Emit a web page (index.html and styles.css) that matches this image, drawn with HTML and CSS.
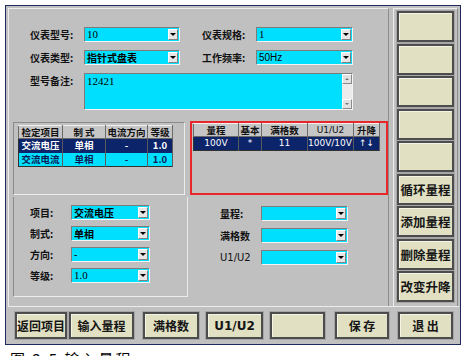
FILE: index.html
```html
<!DOCTYPE html>
<html lang="zh">
<head>
    <meta charset="UTF-8">
    <title>输入量程</title>
    <link rel="stylesheet" href="styles.css">
</head>
<body>
    <div class="window">
        <div class="body">
            <div class="main">
                <!-- 仪表信息 -->
                <div class="info">
                    <div class="info-row">
                        <span class="lbl">仪表型号:</span>
                        <div class="combo w96"><span class="val serif">10</span><i class="drop"></i></div>
                        <span class="lbl lbl-gap">仪表规格:</span>
                        <div class="combo w97"><span class="val serif">1</span><i class="drop"></i></div>
                    </div>
                    <div class="info-row">
                        <span class="lbl">仪表类型:</span>
                        <div class="combo w96"><span class="val bold">指针式盘表</span><i class="drop"></i></div>
                        <span class="lbl lbl-gap">工作频率:</span>
                        <div class="combo w97"><span class="val">50Hz</span><i class="drop"></i></div>
                    </div>
                    <div class="info-row memo-row">
                        <span class="lbl">型号备注:</span>
                        <div class="memo">
                            <span class="memo-text serif">12421</span>
                            <div class="vscroll">
                                <i class="sbtn up"></i>
                                <div class="track"></div>
                                <i class="sbtn down"></i>
                            </div>
                        </div>
                    </div>
                </div>

                <!-- 检定项目 / 量程列表 -->
                <div class="lists">
                    <div class="list-panel">
                        <table class="grid items">
                            <colgroup><col style="width:44px"><col style="width:43px"><col style="width:42px"><col style="width:25px"></colgroup>
                            <tr><th>检定项目</th><th>制 式</th><th>电流方向</th><th>等级</th></tr>
                            <tr class="row-sel"><td>交流电压</td><td>单相</td><td>-</td><td>1.0</td></tr>
                            <tr class="row-alt"><td>交流电流</td><td>单相</td><td>-</td><td>1.0</td></tr>
                        </table>
                    </div>
                    <div class="range-panel">
                        <table class="grid ranges">
                            <colgroup><col style="width:45px"><col style="width:23px"><col style="width:46px"><col style="width:46px"><col style="width:26px"></colgroup>
                            <tr><th>量程</th><th>基本</th><th>满格数</th><th class="latin">U1/U2</th><th>升降</th></tr>
                            <tr class="row-sel"><td>100V</td><td>*</td><td>11</td><td class="clip">100V/10V</td><td>↑↓</td></tr>
                        </table>
                    </div>
                </div>

                <!-- 编辑区 -->
                <div class="edit">
                    <div class="edit-left">
                        <div class="edit-row"><span class="lbl lbl-s">项目:</span><div class="combo w79"><span class="val bold">交流电压</span><i class="drop"></i></div></div>
                        <div class="edit-row"><span class="lbl lbl-s">制式:</span><div class="combo w79"><span class="val bold">单相</span><i class="drop"></i></div></div>
                        <div class="edit-row"><span class="lbl lbl-s">方向:</span><div class="combo w79"><span class="val">-</span><i class="drop"></i></div></div>
                        <div class="edit-row"><span class="lbl lbl-s">等级:</span><div class="combo w79"><span class="val serif">1.0</span><i class="drop"></i></div></div>
                    </div>
                    <div class="edit-right">
                        <div class="edit-row"><span class="lbl lbl-s">量程:</span><div class="combo w87"><span class="val"></span><i class="drop"></i></div></div>
                        <div class="edit-row"><span class="lbl lbl-s">满格数</span><div class="combo w87"><span class="val"></span><i class="drop"></i></div></div>
                        <div class="edit-row"><span class="lbl lbl-s latin">U1/U2</span><div class="combo w87"><span class="val"></span><i class="drop"></i></div></div>
                    </div>
                </div>
            </div>

            <div class="side">
                <button class="btn"></button>
                <button class="btn"></button>
                <button class="btn"></button>
                <button class="btn"></button>
                <button class="btn"></button>
                <button class="btn">循环量程</button>
                <button class="btn">添加量程</button>
                <button class="btn">删除量程</button>
                <button class="btn">改变升降</button>
            </div>
        </div>

        <div class="bar">
            <button class="btn b1">返回项目</button>
            <button class="btn b2">输入量程</button>
            <button class="btn b3">满格数</button>
            <button class="btn b4 latin">U1/U2</button>
            <button class="btn b5"></button>
            <button class="btn b6">保 存</button>
            <button class="btn b7">退 出</button>
        </div>
    </div>
    <p class="caption">图 3.5 输入量程</p>
</body>
</html>
```

FILE: styles.css
```css
* {
    box-sizing: border-box;
}

body {
    margin: 0;
    height: 356px;
    overflow: hidden;
    background: #fff;
    font-family: "Liberation Sans", "Noto Sans CJK SC", sans-serif;
    font-size: 10px;
    color: #000;
}

.window {
    margin: 5px 0 0 5px;
    width: 456px;
    height: 340px;
    border: 1px solid #1e2a5c;
    background: #c0c0c0;
    display: flex;
    flex-direction: column;
    padding: 2px 1px 0 2px;
}

.body {
    display: flex;
    height: 298px;
}

.main {
    width: 381px;
    border-top: 1px solid #ececec;
    border-left: 1px solid #ececec;
    border-right: 1px solid #8c8c8c;
}

/* labels & combos */
.lbl {
    width: 54px;
    font-family: "Noto Sans CJK SC", sans-serif;
    font-weight: bold;
    font-size: 10px;
    line-height: 15px;
    color: #111;
}

.lbl-gap {
    margin-left: 22px;
}

.lbl-s {
    width: 41px;
}

.latin {
    font-family: "DejaVu Sans", sans-serif;
    font-weight: normal;
}

.combo {
    display: flex;
    height: 15px;
    border: 1px solid;
    border-color: #7c7c7c #f4f4f4 #f4f4f4 #7c7c7c;
    background: #00e0fe;
}

.w96 { width: 96px; }
.w97 { width: 97px; }
.w79 { width: 79px; }
.w87 { width: 87px; }

.val {
    flex: 1;
    padding-left: 2px;
    font-size: 10px;
    line-height: 13px;
    white-space: nowrap;
    overflow: hidden;
}

.serif {
    font-family: "Liberation Serif", serif;
    font-size: 11px;
}

.bold {
    font-family: "Noto Sans CJK SC", sans-serif;
    font-weight: bold;
}

.drop {
    width: 10px;
    margin: 1px;
    background: #e6e6e6;
    border: 1px solid;
    border-color: #fff #808080 #808080 #fff;
    display: flex;
    align-items: center;
    justify-content: center;
}

.drop::after {
    content: "";
    border-left: 3px solid transparent;
    border-right: 3px solid transparent;
    border-top: 3px solid #000;
}

/* info section */
.info {
    padding: 18px 0 0 21px;
    display: flex;
    flex-direction: column;
    gap: 8px;
}

.info-row {
    display: flex;
    align-items: flex-start;
}

.memo {
    width: 269px;
    height: 37px;
    display: flex;
    border: 1px solid;
    border-color: #7c7c7c #f4f4f4 #f4f4f4 #7c7c7c;
    background: #00e0fe;
}

.memo-text {
    flex: 1;
    padding: 1px 2px;
}

.vscroll {
    width: 10px;
    display: flex;
    flex-direction: column;
    background: #e4e4e4;
}

.track {
    flex: 1;
    background: #ececec;
}

.sbtn {
    height: 10px;
    background: #e2e2e2;
    border: 1px solid;
    border-color: #fff #8a8a8a #8a8a8a #fff;
    display: flex;
    align-items: center;
    justify-content: center;
}

.sbtn.up::after {
    content: "";
    border-left: 2px solid transparent;
    border-right: 2px solid transparent;
    border-bottom: 2px solid #777;
}

.sbtn.down::after {
    content: "";
    border-left: 2px solid transparent;
    border-right: 2px solid transparent;
    border-top: 2px solid #777;
}

/* list tables */
.lists {
    margin-top: 12px;
    height: 73px;
    display: flex;
    padding-left: 4px;
}

.list-panel {
    width: 172px;
    border: 1px solid;
    border-color: #8a8a8a #ececec #ececec #8a8a8a;
    padding: 2px 0 0 4px;
}

.range-panel {
    width: 198px;
    margin-left: 5px;
    margin-top: -1px;
    border: 2px solid #e8272b;
    padding-left: 1px;
}

.grid {
    border-collapse: collapse;
    table-layout: fixed;
    border: 1px solid #303030;
    font-family: "Noto Sans CJK SC", sans-serif;
    font-size: 9.5px;
}

.items { width: 155px; }
.ranges { width: 186px; }

.grid th {
    height: 13px;
    padding: 0;
    background: #c6c6c6;
    border: 1px solid #6a6a6a;
    border-top-color: #f0f0f0;
    font-weight: bold;
    line-height: 12px;
    text-align: center;
    color: #111;
    overflow: hidden;
}

.grid th.latin {
    font-family: "DejaVu Sans", sans-serif;
    font-weight: normal;
    font-size: 9px;
}

.grid td {
    height: 14px;
    padding: 0;
    border-right: 1px solid #5a5a5a;
    text-align: center;
    line-height: 13px;
    white-space: nowrap;
    overflow: hidden;
    font-weight: bold;
}

.ranges td {
    font-family: "DejaVu Sans", "Noto Sans CJK SC", sans-serif;
    font-weight: normal;
    font-size: 9px;
}

.grid td.clip {
    text-align: left;
    text-overflow: clip;
}

.row-sel td {
    background: #0b246a;
    color: #fff;
}

.row-alt td {
    background: #00e0fe;
    color: #0b1a55;
}

/* edit section */
.edit {
    margin-top: 2px;
    height: 100px;
    display: flex;
    padding-left: 4px;
}

.edit-left {
    width: 175px;
    border-left: 1px solid #8a8a8a;
    border-right: 1px solid #ececec;
    border-bottom: 1px solid #ececec;
    padding: 8px 0 0 16px;
    display: flex;
    flex-direction: column;
    gap: 6px;
}

.edit-right {
    padding: 9px 0 0 32px;
    display: flex;
    flex-direction: column;
    gap: 7px;
}

.edit-row {
    display: flex;
}

/* side buttons */
.side {
    width: 65px;
    margin-left: 4px;
    border-top: 1px solid #ececec;
    border-left: 1px solid #ececec;
    border-right: 1px solid #8c8c8c;
    padding: 2px 3px 0 3px;
    display: flex;
    flex-direction: column;
    gap: 1.5px;
}

.btn {
    height: 31px;
    margin: 0;
    padding: 0;
    background: #e1e0c2;
    border: 2px solid #4c4c4c;
    box-shadow: inset 1px 1px 0 #f4f4e6, 0 0 0 1px #a6a6a6;
    font-family: "Noto Sans CJK SC", sans-serif;
    font-weight: bold;
    font-size: 12.5px;
    color: #151515;
    white-space: nowrap;
}

.btn.latin {
    font-family: "DejaVu Sans", sans-serif;
    font-weight: bold;
    font-size: 12px;
}

/* bottom bar */
.bar {
    flex: 1;
    border-top: 1px solid #ececec;
    padding: 5px 0 0 7px;
    display: flex;
    align-items: flex-start;
}

.bar .btn {
    height: 27px;
    font-size: 12px;
}

.b1 { width: 52px; }
.b2 { width: 65px; margin-left: 2px; }
.b3 { width: 56px; margin-left: 9px; }
.b4 { width: 57px; margin-left: 7px; }
.b5 { width: 55px; margin-left: 7px; }
.b6 { width: 54px; margin-left: 10px; }
.b7 { width: 55px; margin-left: 9px; }

.caption {
    margin: 3px 0 0 10px;
    font-family: "Noto Sans CJK SC", sans-serif;
    font-size: 15px;
    letter-spacing: 2px;
}
```
